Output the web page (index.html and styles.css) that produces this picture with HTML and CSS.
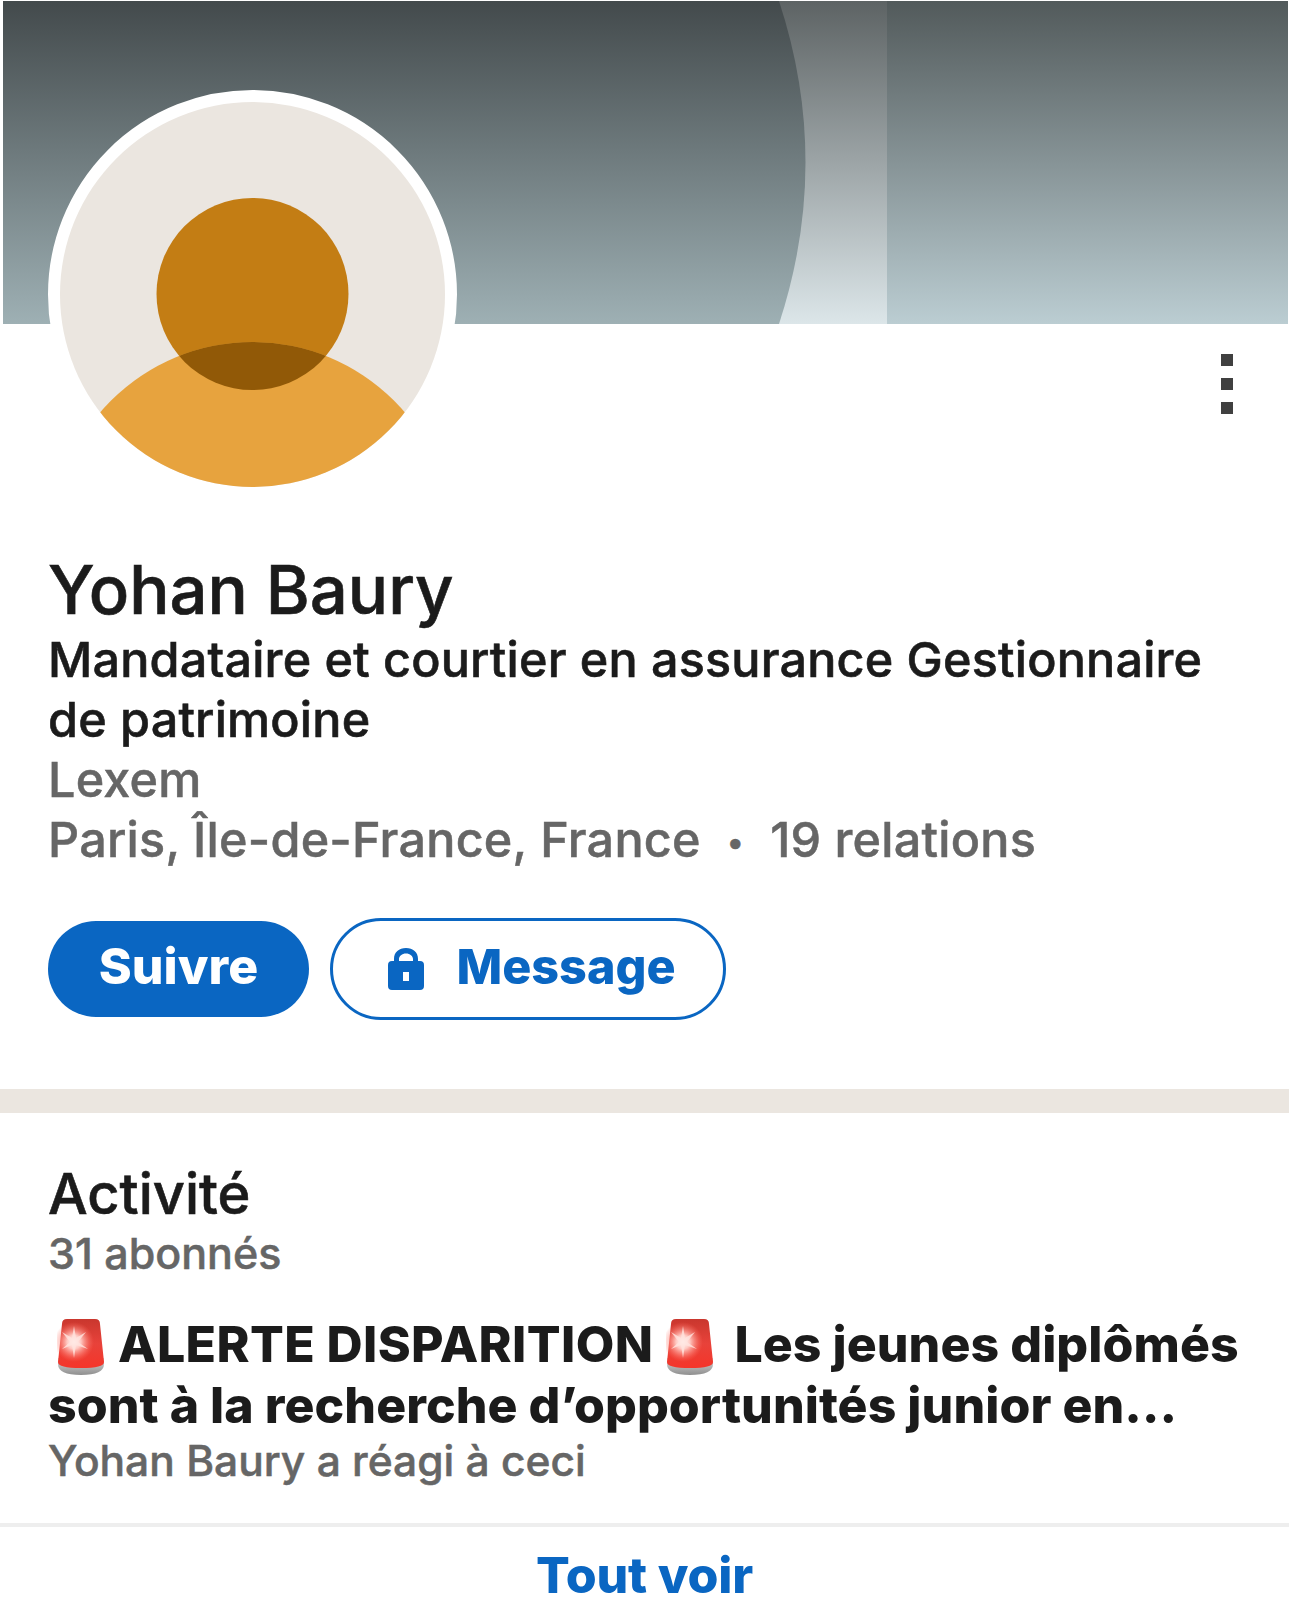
FILE: index.html
```html
<!DOCTYPE html>
<html lang="fr">
<head>
    <meta charset="UTF-8">
    <meta name="viewport" content="width=device-width, initial-scale=1.0">
    <title>Yohan Baury</title>
    <link rel="stylesheet" href="styles.css">
</head>
<body>
    <svg width="0" height="0" class="defs">
        <defs>
            <linearGradient id="sirenRed" x1="0" y1="0" x2="0" y2="1">
                <stop offset="0" stop-color="#c9372e"/>
                <stop offset="0.5" stop-color="#e8423a"/>
                <stop offset="1" stop-color="#f5352a"/>
            </linearGradient>
            <radialGradient id="sirenFlash">
                <stop offset="0" stop-color="#ffffff"/>
                <stop offset="0.35" stop-color="#ffc9c2"/>
                <stop offset="1" stop-color="#ff6a5c" stop-opacity="0"/>
            </radialGradient>
            <linearGradient id="sirenBase" x1="0" y1="0" x2="0" y2="1">
                <stop offset="0" stop-color="#d8d8d8"/>
                <stop offset="1" stop-color="#8f8f8f"/>
            </linearGradient>
            <symbol id="siren" viewBox="0 0 48 58">
                <path d="M1 46 Q1 57 24 57 Q47 57 47 46 L47 40 L1 40 Z" fill="url(#sirenBase)"/>
                <path d="M5 6 Q5 1 10 1 L38 1 Q43 1 43 6 L47 44 Q47 50 24 50 Q1 50 1 44 Z" fill="url(#sirenRed)"/>
                <circle cx="17" cy="24" r="20" fill="url(#sirenFlash)"/>
                <path d="M17 8 L19 20 L29 14 L21 24 L31 31 L19 27 L17 40 L15 27 L5 31 L13 24 L5 14 L15 20 Z" fill="#ffe3de" opacity="0.8"/>
            </symbol>
        </defs>
    </svg>

    <div class="profile">
        <!-- banner -->
        <div class="banner">
            <svg class="banner-art" viewBox="0 0 1285 323" preserveAspectRatio="none">
                <defs>
                    <linearGradient id="bannerLeft" x1="0" y1="0" x2="0" y2="1">
                        <stop offset="0" stop-color="#434a4c"/>
                        <stop offset="1" stop-color="#9eb0b4"/>
                    </linearGradient>
                    <linearGradient id="bannerBand" x1="0" y1="0" x2="0" y2="1">
                        <stop offset="0" stop-color="#5d6364"/>
                        <stop offset="1" stop-color="#dce6e9"/>
                    </linearGradient>
                    <linearGradient id="bannerRight" x1="0" y1="0" x2="0" y2="1">
                        <stop offset="0" stop-color="#525a5b"/>
                        <stop offset="1" stop-color="#bbcdd2"/>
                    </linearGradient>
                </defs>
                <rect width="1285" height="323" fill="url(#bannerLeft)"/>
                <rect x="775" width="510" height="323" fill="url(#bannerBand)"/>
                <rect x="884" width="401" height="323" fill="url(#bannerRight)"/>
                <path d="M0 0 H776 Q829 161 776 323 H0 Z" fill="url(#bannerLeft)"/>
            </svg>
        </div>

        <!-- avatar and menu -->
        <div class="top-row">
            <div class="avatar">
                <svg viewBox="0 0 385 385" width="385" height="385">
                    <defs>
                        <clipPath id="avatarClip"><circle cx="192.5" cy="192.5" r="192.5"/></clipPath>
                        <clipPath id="headClip"><circle cx="192.5" cy="192" r="96"/></clipPath>
                    </defs>
                    <g clip-path="url(#avatarClip)">
                        <rect width="385" height="385" fill="#ebe6e0"/>
                        <circle cx="192.5" cy="192" r="96" fill="#c37d14"/>
                        <circle cx="192.5" cy="440" r="200" fill="#e7a33e"/>
                        <circle cx="192.5" cy="440" r="200" fill="#915907" clip-path="url(#headClip)"/>
                    </g>
                </svg>
            </div>
            <div class="more-btn">
                <span class="dot"></span>
                <span class="dot"></span>
                <span class="dot"></span>
            </div>
        </div>

        <!-- infos -->
        <div class="info">
            <h1 class="name">Yohan Baury</h1>
            <div class="headline">Mandataire et courtier en assurance Gestionnaire<br>de patrimoine</div>
            <div class="meta">Lexem</div>
            <div class="meta">Paris, Île-de-France, France<span class="sep">•</span>19 relations</div>
            <div class="actions">
                <button class="btn-follow"><span class="btn-label">Suivre</span></button>
                <button class="btn-message">
                    <svg class="lock" viewBox="0 0 36 42" width="36" height="42">
                        <path fill="#0a66c2" fill-rule="evenodd" d="M6 13 V11 C6 4 11 0 18 0 C25 0 30 4 30 11 V13 H32 Q36 13 36 17 V38 Q36 42 32 42 H4 Q0 42 0 38 V17 Q0 13 4 13 Z M11 13 H25 V11 C25 8 22 5.500 18 5.500 C14 5.500 11 8 11 11 Z M15 24 V33 H21 V24 Z"/>
                    </svg>
                    <span class="btn-label">Message</span>
                </button>
            </div>
        </div>

        <div class="divider"></div>

        <!-- activity -->
        <div class="activity">
            <h2 class="activity-title">Activité</h2>
            <div class="meta-small">31 abonnés</div>
            <div class="post-text">
                <svg class="siren first"><use href="#siren"/></svg><span class="post-alert">ALERTE DISPARITION</span><svg class="siren second"><use href="#siren"/></svg>Les jeunes diplômés<br>sont à la recherche d’opportunités junior en…
            </div>
            <div class="post-meta">Yohan Baury a réagi à ceci</div>
        </div>

        <div class="see-all">Tout voir</div>
    </div>
</body>
</html>
```

FILE: styles.css
```css
body {
    margin: 0;
    background: #ffffff;
    font-family: Inter, "Liberation Sans", sans-serif;
    color: #1b1b1b;
}
.defs {
    display: block;
    height: 0;
}
.profile {
    width: 1289px;
    height: 1612px;
    overflow: hidden;
}
.banner {
    height: 323px;
    margin: 1px 1px 0 3px;
}
.banner-art {
    display: block;
    width: 100%;
    height: 100%;
}
.top-row {
    display: flex;
    justify-content: space-between;
    align-items: flex-start;
    padding: 0 56px 0 48px;
    height: 226px;
}
.avatar {
    width: 385px;
    height: 385px;
    margin-top: -234px;
    border: 12px solid #ffffff;
    border-radius: 50%;
    background: #ffffff;
    position: relative;
}
.avatar svg {
    display: block;
}
.more-btn {
    display: flex;
    flex-direction: column;
    gap: 12px;
    margin-top: 30px;
}
.dot {
    width: 12px;
    height: 12px;
    background: #404040;
}
.info {
    padding: 0 48px;
}
.name {
    margin: 0;
    font-size: 67px;
    line-height: 80px;
    font-weight: 500;
    -webkit-text-stroke: 0.6px;
}
.headline {
    font-size: 48.5px;
    line-height: 60px;
    font-weight: 500;
    letter-spacing: 0.2px;
    -webkit-text-stroke: 0.6px;
}
.meta {
    font-size: 48.5px;
    line-height: 60px;
    font-weight: 500;
    letter-spacing: 0.25px;
    color: #666666;
    -webkit-text-stroke: 0.5px;
}
.sep {
    font-size: 32px;
    margin: 0 26px;
    vertical-align: 4px;
}
.actions {
    display: flex;
    align-items: center;
    gap: 21px;
    margin-top: 46px;
}
.btn-follow {
    width: 261px;
    height: 96px;
    border: none;
    border-radius: 48px;
    background: #0a66c2;
    color: #ffffff;
    font: 800 50px Inter, "Liberation Sans", sans-serif;
}
.btn-message {
    display: flex;
    align-items: center;
    justify-content: center;
    gap: 32px;
    width: 396px;
    height: 102px;
    box-sizing: border-box;
    padding: 0 0 0 8px;
    border: 3px solid #0a66c2;
    border-radius: 51px;
    background: #ffffff;
    color: #0a66c2;
    font: 800 48.5px Inter, "Liberation Sans", sans-serif;
}
.btn-label {
    display: block;
    margin-bottom: 6px;
}
.divider {
    height: 24px;
    margin-top: 69px;
    background: #ebe6e0;
}
.activity {
    padding: 49px 48px 0;
}
.activity-title {
    margin: 0;
    font-size: 56px;
    line-height: 64px;
    font-weight: 500;
    -webkit-text-stroke: 0.6px;
}
.meta-small {
    font-size: 43px;
    line-height: 54px;
    font-weight: 500;
    color: #666666;
    -webkit-text-stroke: 0.5px;
}
.post-text {
    margin-top: 35px;
    font-size: 50px;
    line-height: 58px;
    font-weight: 800;
    letter-spacing: 0.05px;
}
.post-alert {
    letter-spacing: 0.4px;
}
.siren {
    width: 48px;
    height: 58px;
    vertical-align: -14px;
}
.siren.first {
    margin: 0 13px 0 9px;
}
.siren.second {
    margin: 0 20px 0 13px;
}
.post-meta {
    font-size: 42.5px;
    line-height: 53px;
    color: #666666;
    font-weight: 500;
    -webkit-text-stroke: 0.5px;
}
.see-all {
    margin-top: 36px;
    padding-top: 18px;
    border-top: 4px solid #eeeeee;
    text-align: center;
    font-size: 50px;
    line-height: 60px;
    font-weight: 800;
    letter-spacing: -0.2px;
    color: #0a66c2;
}
```
